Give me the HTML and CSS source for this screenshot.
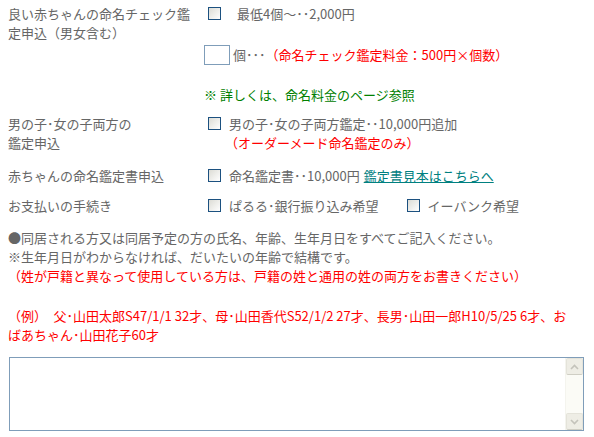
FILE: index.html
```html
<!DOCTYPE html>
<html lang="ja">
<head>
  <meta charset="UTF-8" />
  <title>命名鑑定申込</title>
  <link rel="stylesheet" href="styles.css">
</head>
<body>

  <div class="form">
    <div class="label">良い赤ちゃんの命名チェック鑑定申込（男女含む）</div>
    <div class="field">
      <label class="check"><input type="checkbox"><span class="pad">最低4個～･･2,000円</span></label>
      <div class="qty">
        <input type="text" class="num">
        <span>個･･･</span><span class="red">（命名チェック鑑定料金：500円×個数）</span>
      </div>
      <div class="green">※ 詳しくは、命名料金のページ参照</div>
    </div>

    <div class="label">男の子･女の子両方の<br>鑑定申込</div>
    <div class="field">
      <label class="check"><input type="checkbox"><span>男の子･女の子両方鑑定･･10,000円追加</span></label>
      <div class="red indent">（オーダーメード命名鑑定のみ）</div>
    </div>

    <div class="label">赤ちゃんの命名鑑定書申込</div>
    <div class="field">
      <label class="check"><input type="checkbox"><span>命名鑑定書･･10,000円</span><a href="#" class="sample">鑑定書見本はこちらへ</a></label>
    </div>

    <div class="label">お支払いの手続き</div>
    <div class="field">
      <div class="line">
        <label class="check"><input type="checkbox"><span>ぱるる･銀行振り込み希望</span></label>
        <label class="check ebank"><input type="checkbox"><span>イーバンク希望</span></label>
      </div>
    </div>
  </div>

  <div class="notes">
    <p>●同居される方又は同居予定の方の氏名、年齢、生年月日をすべてご記入ください。</p>
    <p>※生年月日がわからなければ、だいたいの年齢で結構です。</p>
    <p class="red">（姓が戸籍と異なって使用している方は、戸籍の姓と通用の姓の両方をお書きください）</p>
    <p class="red example">（例）　父･山田太郎S47/1/1 32才、母･山田香代S52/1/2 27才、長男･山田一郎H10/5/25 6才、お<br>ばあちゃん･山田花子60才</p>
  </div>

  <div class="memo">
    <textarea></textarea>
    <div class="scroll">
      <span class="btn"><svg width="9" height="6" viewBox="0 0 9 6"><path d="M1 5 L4.5 1.5 L8 5" fill="none" stroke="#c4c3bb" stroke-width="1.6"/></svg></span>
      <span class="btn"><svg width="9" height="6" viewBox="0 0 9 6"><path d="M1 1 L4.5 4.5 L8 1" fill="none" stroke="#c4c3bb" stroke-width="1.6"/></svg></span>
    </div>
  </div>

</body>
</html>
```

FILE: styles.css
```css
body { margin: 0 8px; font-family: "Noto Sans CJK JP", "Noto Sans", sans-serif; font-size: 13px; line-height: 19px; color: #666; background: #fff; }
p { margin: 0; }

.red { color: #ff0000; }
.green { color: #008000; height: 18px; margin-top: 20px; }

.form { display: grid; grid-template-columns: 196px 1fr; row-gap: 11px; padding-top: 4px; }
.label { padding-right: 10px; }

.check { display: flex; align-items: center; height: 19px; }
.check input {
  appearance: none;
  flex: none;
  width: 13px; height: 13px;
  margin: 0 8px 0 4px;
  border: 1px solid #1c5180;
  background: linear-gradient(135deg, #dcdcd5, #fff);
}
.check .pad { padding-left: 8px; }
.line { display: flex; height: 19px; }
.ebank { margin-left: 24px; }

.qty { display: flex; align-items: center; height: 21px; margin-top: 21px; }
.num { width: 24px; height: 18px; margin: 0 3px 0 0; padding: 0; border: 1px solid #7f9db9; }
.indent { height: 22px; padding-left: 21px; }

.sample { color: #008080; margin-left: 4px; }

.notes { margin-top: 13px; }
.example { margin-top: 21px; }

.memo { display: flex; margin: 13px 2px 0 1px; height: 72px; border: 1px solid #7f9db9; }
.memo textarea { flex: 1; border: none; resize: none; outline: none; padding: 0; }
.scroll { width: 17px; display: flex; flex-direction: column; justify-content: space-between; background: #fbfbf6; border-left: 1px solid #f4f4ee; }
.btn { height: 15px; display: flex; align-items: center; justify-content: center; background: #eeede5; border: 1px solid #e4e3da; border-bottom-color: #cfcec4; border-radius: 2px; }
```
